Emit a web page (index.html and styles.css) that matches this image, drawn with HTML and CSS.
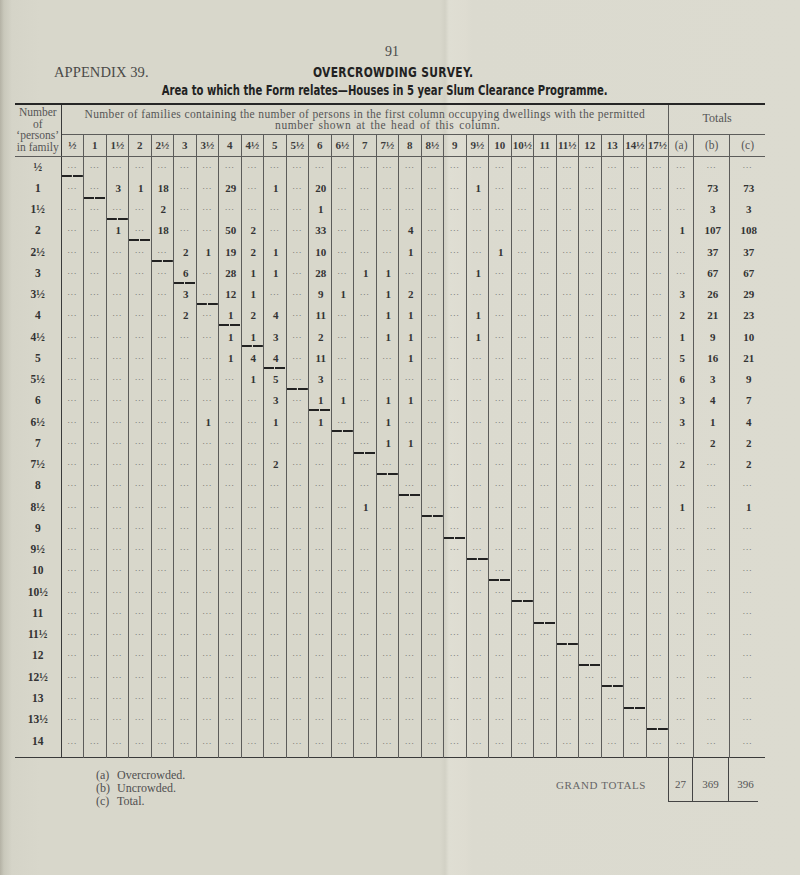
FILE: index.html
```html
<!DOCTYPE html>
<html lang="en">
<head>
<meta charset="utf-8">
<title>Appendix 39 - Overcrowding Survey</title>
<link rel="stylesheet" href="styles.css">
</head>
<body>
<div class="page">
  <div class="folio">91</div>
  <div class="titles">
    <div class="appendix">APPENDIX 39.</div>
    <div class="survey"><span class="squeeze">OVERCROWDING SURVEY.</span></div>
    <div></div>
  </div>
  <div class="subtitle"><span class="squeeze">Area to which the Form relates—Houses in 5 year Slum Clearance Programme.</span></div>

  <table class="grid">
    <colgroup>
      <col class="c-lab">
      <col class="c-d"><col class="c-d"><col class="c-d"><col class="c-d"><col class="c-d"><col class="c-d"><col class="c-d"><col class="c-d"><col class="c-d">
      <col class="c-d"><col class="c-d"><col class="c-d"><col class="c-d"><col class="c-d"><col class="c-d"><col class="c-d"><col class="c-d"><col class="c-d">
      <col class="c-d"><col class="c-d"><col class="c-d"><col class="c-d"><col class="c-d"><col class="c-d"><col class="c-d"><col class="c-d"><col class="c-d">
      <col class="c-a"><col class="c-b"><col class="c-c">
    </colgroup>
    <thead>
      <tr class="h1">
        <th class="h-lab" rowspan="2">Number<br>of<br>‘persons’<br>in family</th>
        <th class="h-main" colspan="27">Number of families containing the number of persons in the first column occupying dwellings with the permitted<span class="l2">number shown at the head of this column.</span></th>
        <th class="h-tot" colspan="3">Totals</th>
      </tr>
      <tr class="h2">
        <th>½</th><th>1</th><th>1½</th><th>2</th><th>2½</th><th>3</th><th>3½</th><th>4</th><th>4½</th><th>5</th><th>5½</th><th>6</th><th>6½</th><th>7</th><th>7½</th><th>8</th><th>8½</th><th>9</th><th>9½</th><th>10</th><th>10½</th><th>11</th><th>11½</th><th>12</th><th>13</th><th>14½</th><th>17½</th>
        <th class="t">(a)</th><th class="t">(b)</th><th class="t">(c)</th>
      </tr>
    </thead>
    <tbody>
      <tr><th>½</th><td class="s">...</td><td>...</td><td>...</td><td>...</td><td>...</td><td>...</td><td>...</td><td>...</td><td>...</td><td>...</td><td>...</td><td>...</td><td>...</td><td>...</td><td>...</td><td>...</td><td>...</td><td>...</td><td>...</td><td>...</td><td>...</td><td>...</td><td>...</td><td>...</td><td>...</td><td>...</td><td>...</td><td>...</td><td>...</td><td>...</td></tr>
      <tr><th>1</th><td>...</td><td class="s">...</td><td class="n">3</td><td class="n">1</td><td class="n">18</td><td>...</td><td>...</td><td class="n">29</td><td>...</td><td class="n">1</td><td>...</td><td class="n">20</td><td>...</td><td>...</td><td>...</td><td>...</td><td>...</td><td>...</td><td class="n">1</td><td>...</td><td>...</td><td>...</td><td>...</td><td>...</td><td>...</td><td>...</td><td>...</td><td>...</td><td class="n">73</td><td class="n">73</td></tr>
      <tr><th>1½</th><td>...</td><td>...</td><td class="s">...</td><td>...</td><td class="n">2</td><td>...</td><td>...</td><td>...</td><td>...</td><td>...</td><td>...</td><td class="n">1</td><td>...</td><td>...</td><td>...</td><td>...</td><td>...</td><td>...</td><td>...</td><td>...</td><td>...</td><td>...</td><td>...</td><td>...</td><td>...</td><td>...</td><td>...</td><td>...</td><td class="n">3</td><td class="n">3</td></tr>
      <tr><th>2</th><td>...</td><td>...</td><td class="n">1</td><td class="s">...</td><td class="n">18</td><td>...</td><td>...</td><td class="n">50</td><td class="n">2</td><td>...</td><td>...</td><td class="n">33</td><td>...</td><td>...</td><td>...</td><td class="n">4</td><td>...</td><td>...</td><td>...</td><td>...</td><td>...</td><td>...</td><td>...</td><td>...</td><td>...</td><td>...</td><td>...</td><td class="n">1</td><td class="n">107</td><td class="n">108</td></tr>
      <tr><th>2½</th><td>...</td><td>...</td><td>...</td><td>...</td><td class="s">...</td><td class="n">2</td><td class="n">1</td><td class="n">19</td><td class="n">2</td><td class="n">1</td><td>...</td><td class="n">10</td><td>...</td><td>...</td><td>...</td><td class="n">1</td><td>...</td><td>...</td><td>...</td><td class="n">1</td><td>...</td><td>...</td><td>...</td><td>...</td><td>...</td><td>...</td><td>...</td><td>...</td><td class="n">37</td><td class="n">37</td></tr>
      <tr><th>3</th><td>...</td><td>...</td><td>...</td><td>...</td><td>...</td><td class="n s">6</td><td>...</td><td class="n">28</td><td class="n">1</td><td class="n">1</td><td>...</td><td class="n">28</td><td>...</td><td class="n">1</td><td class="n">1</td><td>...</td><td>...</td><td>...</td><td class="n">1</td><td>...</td><td>...</td><td>...</td><td>...</td><td>...</td><td>...</td><td>...</td><td>...</td><td>...</td><td class="n">67</td><td class="n">67</td></tr>
      <tr><th>3½</th><td>...</td><td>...</td><td>...</td><td>...</td><td>...</td><td class="n">3</td><td class="s">...</td><td class="n">12</td><td class="n">1</td><td>...</td><td>...</td><td class="n">9</td><td class="n">1</td><td>...</td><td class="n">1</td><td class="n">2</td><td>...</td><td>...</td><td>...</td><td>...</td><td>...</td><td>...</td><td>...</td><td>...</td><td>...</td><td>...</td><td>...</td><td class="n">3</td><td class="n">26</td><td class="n">29</td></tr>
      <tr><th>4</th><td>...</td><td>...</td><td>...</td><td>...</td><td>...</td><td class="n">2</td><td>...</td><td class="n s">1</td><td class="n">2</td><td class="n">4</td><td>...</td><td class="n">11</td><td>...</td><td>...</td><td class="n">1</td><td class="n">1</td><td>...</td><td>...</td><td class="n">1</td><td>...</td><td>...</td><td>...</td><td>...</td><td>...</td><td>...</td><td>...</td><td>...</td><td class="n">2</td><td class="n">21</td><td class="n">23</td></tr>
      <tr><th>4½</th><td>...</td><td>...</td><td>...</td><td>...</td><td>...</td><td>...</td><td>...</td><td class="n">1</td><td class="n s">1</td><td class="n">3</td><td>...</td><td class="n">2</td><td>...</td><td>...</td><td class="n">1</td><td class="n">1</td><td>...</td><td>...</td><td class="n">1</td><td>...</td><td>...</td><td>...</td><td>...</td><td>...</td><td>...</td><td>...</td><td>...</td><td class="n">1</td><td class="n">9</td><td class="n">10</td></tr>
      <tr><th>5</th><td>...</td><td>...</td><td>...</td><td>...</td><td>...</td><td>...</td><td>...</td><td class="n">1</td><td class="n">4</td><td class="n s">4</td><td>...</td><td class="n">11</td><td>...</td><td>...</td><td>...</td><td class="n">1</td><td>...</td><td>...</td><td>...</td><td>...</td><td>...</td><td>...</td><td>...</td><td>...</td><td>...</td><td>...</td><td>...</td><td class="n">5</td><td class="n">16</td><td class="n">21</td></tr>
      <tr><th>5½</th><td>...</td><td>...</td><td>...</td><td>...</td><td>...</td><td>...</td><td>...</td><td>...</td><td class="n">1</td><td class="n">5</td><td class="s">...</td><td class="n">3</td><td>...</td><td>...</td><td>...</td><td>...</td><td>...</td><td>...</td><td>...</td><td>...</td><td>...</td><td>...</td><td>...</td><td>...</td><td>...</td><td>...</td><td>...</td><td class="n">6</td><td class="n">3</td><td class="n">9</td></tr>
      <tr><th>6</th><td>...</td><td>...</td><td>...</td><td>...</td><td>...</td><td>...</td><td>...</td><td>...</td><td>...</td><td class="n">3</td><td>...</td><td class="n s">1</td><td class="n">1</td><td>...</td><td class="n">1</td><td class="n">1</td><td>...</td><td>...</td><td>...</td><td>...</td><td>...</td><td>...</td><td>...</td><td>...</td><td>...</td><td>...</td><td>...</td><td class="n">3</td><td class="n">4</td><td class="n">7</td></tr>
      <tr><th>6½</th><td>...</td><td>...</td><td>...</td><td>...</td><td>...</td><td>...</td><td class="n">1</td><td>...</td><td>...</td><td class="n">1</td><td>...</td><td class="n">1</td><td class="s">...</td><td>...</td><td class="n">1</td><td>...</td><td>...</td><td>...</td><td>...</td><td>...</td><td>...</td><td>...</td><td>...</td><td>...</td><td>...</td><td>...</td><td>...</td><td class="n">3</td><td class="n">1</td><td class="n">4</td></tr>
      <tr><th>7</th><td>...</td><td>...</td><td>...</td><td>...</td><td>...</td><td>...</td><td>...</td><td>...</td><td>...</td><td>...</td><td>...</td><td>...</td><td>...</td><td class="s">...</td><td class="n">1</td><td class="n">1</td><td>...</td><td>...</td><td>...</td><td>...</td><td>...</td><td>...</td><td>...</td><td>...</td><td>...</td><td>...</td><td>...</td><td>...</td><td class="n">2</td><td class="n">2</td></tr>
      <tr><th>7½</th><td>...</td><td>...</td><td>...</td><td>...</td><td>...</td><td>...</td><td>...</td><td>...</td><td>...</td><td class="n">2</td><td>...</td><td>...</td><td>...</td><td>...</td><td class="s">...</td><td>...</td><td>...</td><td>...</td><td>...</td><td>...</td><td>...</td><td>...</td><td>...</td><td>...</td><td>...</td><td>...</td><td>...</td><td class="n">2</td><td>...</td><td class="n">2</td></tr>
      <tr><th>8</th><td>...</td><td>...</td><td>...</td><td>...</td><td>...</td><td>...</td><td>...</td><td>...</td><td>...</td><td>...</td><td>...</td><td>...</td><td>...</td><td>...</td><td>...</td><td class="s">...</td><td>...</td><td>...</td><td>...</td><td>...</td><td>...</td><td>...</td><td>...</td><td>...</td><td>...</td><td>...</td><td>...</td><td>...</td><td>...</td><td>...</td></tr>
      <tr><th>8½</th><td>...</td><td>...</td><td>...</td><td>...</td><td>...</td><td>...</td><td>...</td><td>...</td><td>...</td><td>...</td><td>...</td><td>...</td><td>...</td><td class="n">1</td><td>...</td><td>...</td><td class="s">...</td><td>...</td><td>...</td><td>...</td><td>...</td><td>...</td><td>...</td><td>...</td><td>...</td><td>...</td><td>...</td><td class="n">1</td><td>...</td><td class="n">1</td></tr>
      <tr><th>9</th><td>...</td><td>...</td><td>...</td><td>...</td><td>...</td><td>...</td><td>...</td><td>...</td><td>...</td><td>...</td><td>...</td><td>...</td><td>...</td><td>...</td><td>...</td><td>...</td><td>...</td><td class="s">...</td><td>...</td><td>...</td><td>...</td><td>...</td><td>...</td><td>...</td><td>...</td><td>...</td><td>...</td><td>...</td><td>...</td><td>...</td></tr>
      <tr><th>9½</th><td>...</td><td>...</td><td>...</td><td>...</td><td>...</td><td>...</td><td>...</td><td>...</td><td>...</td><td>...</td><td>...</td><td>...</td><td>...</td><td>...</td><td>...</td><td>...</td><td>...</td><td>...</td><td class="s">...</td><td>...</td><td>...</td><td>...</td><td>...</td><td>...</td><td>...</td><td>...</td><td>...</td><td>...</td><td>...</td><td>...</td></tr>
      <tr><th>10</th><td>...</td><td>...</td><td>...</td><td>...</td><td>...</td><td>...</td><td>...</td><td>...</td><td>...</td><td>...</td><td>...</td><td>...</td><td>...</td><td>...</td><td>...</td><td>...</td><td>...</td><td>...</td><td>...</td><td class="s">...</td><td>...</td><td>...</td><td>...</td><td>...</td><td>...</td><td>...</td><td>...</td><td>...</td><td>...</td><td>...</td></tr>
      <tr><th>10½</th><td>...</td><td>...</td><td>...</td><td>...</td><td>...</td><td>...</td><td>...</td><td>...</td><td>...</td><td>...</td><td>...</td><td>...</td><td>...</td><td>...</td><td>...</td><td>...</td><td>...</td><td>...</td><td>...</td><td>...</td><td class="s">...</td><td>...</td><td>...</td><td>...</td><td>...</td><td>...</td><td>...</td><td>...</td><td>...</td><td>...</td></tr>
      <tr><th>11</th><td>...</td><td>...</td><td>...</td><td>...</td><td>...</td><td>...</td><td>...</td><td>...</td><td>...</td><td>...</td><td>...</td><td>...</td><td>...</td><td>...</td><td>...</td><td>...</td><td>...</td><td>...</td><td>...</td><td>...</td><td>...</td><td class="s">...</td><td>...</td><td>...</td><td>...</td><td>...</td><td>...</td><td>...</td><td>...</td><td>...</td></tr>
      <tr><th>11½</th><td>...</td><td>...</td><td>...</td><td>...</td><td>...</td><td>...</td><td>...</td><td>...</td><td>...</td><td>...</td><td>...</td><td>...</td><td>...</td><td>...</td><td>...</td><td>...</td><td>...</td><td>...</td><td>...</td><td>...</td><td>...</td><td>...</td><td class="s">...</td><td>...</td><td>...</td><td>...</td><td>...</td><td>...</td><td>...</td><td>...</td></tr>
      <tr><th>12</th><td>...</td><td>...</td><td>...</td><td>...</td><td>...</td><td>...</td><td>...</td><td>...</td><td>...</td><td>...</td><td>...</td><td>...</td><td>...</td><td>...</td><td>...</td><td>...</td><td>...</td><td>...</td><td>...</td><td>...</td><td>...</td><td>...</td><td>...</td><td class="s">...</td><td>...</td><td>...</td><td>...</td><td>...</td><td>...</td><td>...</td></tr>
      <tr><th>12½</th><td>...</td><td>...</td><td>...</td><td>...</td><td>...</td><td>...</td><td>...</td><td>...</td><td>...</td><td>...</td><td>...</td><td>...</td><td>...</td><td>...</td><td>...</td><td>...</td><td>...</td><td>...</td><td>...</td><td>...</td><td>...</td><td>...</td><td>...</td><td>...</td><td class="s">...</td><td>...</td><td>...</td><td>...</td><td>...</td><td>...</td></tr>
      <tr><th>13</th><td>...</td><td>...</td><td>...</td><td>...</td><td>...</td><td>...</td><td>...</td><td>...</td><td>...</td><td>...</td><td>...</td><td>...</td><td>...</td><td>...</td><td>...</td><td>...</td><td>...</td><td>...</td><td>...</td><td>...</td><td>...</td><td>...</td><td>...</td><td>...</td><td>...</td><td class="s">...</td><td>...</td><td>...</td><td>...</td><td>...</td></tr>
      <tr><th>13½</th><td>...</td><td>...</td><td>...</td><td>...</td><td>...</td><td>...</td><td>...</td><td>...</td><td>...</td><td>...</td><td>...</td><td>...</td><td>...</td><td>...</td><td>...</td><td>...</td><td>...</td><td>...</td><td>...</td><td>...</td><td>...</td><td>...</td><td>...</td><td>...</td><td>...</td><td>...</td><td class="s">...</td><td>...</td><td>...</td><td>...</td></tr>
      <tr class="last"><th>14</th><td>...</td><td>...</td><td>...</td><td>...</td><td>...</td><td>...</td><td>...</td><td>...</td><td>...</td><td>...</td><td>...</td><td>...</td><td>...</td><td>...</td><td>...</td><td>...</td><td>...</td><td>...</td><td>...</td><td>...</td><td>...</td><td>...</td><td>...</td><td>...</td><td>...</td><td>...</td><td>...</td><td>...</td><td>...</td><td>...</td></tr>
    </tbody>
  </table>

  <div class="foot">
    <div class="notes">
      <span>(a)</span><span>Overcrowded.</span>
      <span>(b)</span><span>Uncrowded.</span>
      <span>(c)</span><span>Total.</span>
    </div>
    <div class="gt-label">GRAND TOTALS</div>
    <div class="gt">
      <span class="gt-a">27</span><span class="gt-b">369</span><span class="gt-c">396</span>
    </div>
  </div>
</div>
</body>
</html>
```

FILE: styles.css
```css
html, body {
  margin: 0;
  padding: 0;
}

body {
  background-color: #d9d8cc;
  background-image: linear-gradient(90deg, #b4b2a5 0, #c9c8bb 4px, #d5d4c8 12px, #d8d7cb 40px, #d8d7cb 440px, #d2d1c5 445px, #dfded3 449px, #dedcd1 466px, #dbdacf 472px, #dcdbd0 800px);
  font-family: "Liberation Serif", "Times New Roman", serif;
  color: #333;
  min-height: 875px;
}

.page {
  width: 750px;
  padding: 44px 0 0 15px;
}

.folio {
  padding-left: 370px;
  font-size: 14px;
  line-height: 16px;
  color: #4a4a4a;
}

.titles {
  display: grid;
  grid-template-columns: 1fr auto 1fr;
  margin-top: 3px;
  line-height: 18px;
}

.appendix {
  padding-left: 39px;
  font-size: 14.5px;
  color: #4a4a48;
  letter-spacing: 0.1px;
}

.squeeze {
  display: inline-block;
  transform: scaleX(0.82);
  transform-origin: center;
}

.survey {
  margin-left: 2px;
  margin-right: -40px;
  font-family: "Liberation Sans Narrow", "DejaVu Sans Condensed", "Liberation Sans", sans-serif;
  font-stretch: condensed;
  font-weight: bold;
  font-size: 14.5px;
  letter-spacing: 0.4px;
  color: #222;
}

.survey .squeeze {
  transform-origin: left center;
}

.subtitle {
  margin-top: 1px;
  text-align: center;
  font-family: "Liberation Sans Narrow", "DejaVu Sans Condensed", "Liberation Sans", sans-serif;
  font-stretch: condensed;
  font-weight: bold;
  font-size: 14px;
  line-height: 16px;
  color: #222;
  padding-right: 10px;
  white-space: nowrap;
}

.subtitle .squeeze {
  transform: scaleX(0.8);
}

/* ---------- table ---------- */

.grid {
  margin-top: 5px;
  border-collapse: collapse;
  table-layout: fixed;
  width: 750px;
  border-top: 2px solid #262626;
  border-bottom: 1px solid #3a3a3a;
}

.c-lab { width: 46px; }
.c-d { width: 22.5px; }
.c-a { width: 25px; }
.c-b { width: 36px; }
.c-c { width: 35.5px; }

.grid th,
.grid td {
  padding: 0;
  text-align: center;
  vertical-align: middle;
  border-left: 1px solid #5c5c5a;
}

.h1 { height: 30px; }
.h2 { height: 22px; }

.h-lab {
  border-left: none !important;
  border-right: 1px solid #3a3a3a;
  border-bottom: 1px solid #5c5c5a;
  font-weight: normal;
  font-size: 11.5px;
  line-height: 11.4px;
  color: #555;
}

.h-main {
  vertical-align: top !important;
  padding-top: 4px !important;
  border-right: 1px solid #5c5c5a;
  border-bottom: 1px solid #5c5c5a;
  border-left: 1px solid #3a3a3a !important;
  font-weight: normal;
  font-size: 11.5px;
  line-height: 11.4px;
  letter-spacing: 0.37px;
  color: #555;
  white-space: nowrap;
}

.h-main .l2 {
  display: block;
  padding-left: 46px;
  letter-spacing: 0.55px;
  word-spacing: 1.5px;
}

.h-tot {
  vertical-align: top !important;
  padding-top: 6px !important;
  border-bottom: 1px solid #5c5c5a;
  font-weight: normal;
  font-size: 12px;
  line-height: 14px;
  color: #555;
}

.h2 th {
  border-bottom: 1px solid #5c5c5a;
  font-weight: bold;
  font-size: 11px;
  color: #3c3c3c;
}

.h2 th.t {
  font-weight: normal;
  font-size: 11.5px;
  color: #555;
}

.grid tbody tr { height: 21.25px; }

.grid tbody th {
  border-left: none;
  border-right: 1px solid #3a3a3a;
  font-weight: bold;
  font-size: 11.5px;
  color: #333;
}

.grid tbody td {
  font-size: 9px;
  letter-spacing: 1px;
  color: #62625e;
  padding-bottom: 4px;
}

.grid tbody td.n {
  font-size: 11px;
  font-weight: bold;
  letter-spacing: 0;
  color: #333;
  padding-bottom: 0;
  padding-left: 2px;
}

.grid tbody td.s {
  background:
    linear-gradient(#222, #222) left bottom / 47% 2px no-repeat,
    linear-gradient(#222, #222) right bottom / 47% 2px no-repeat;
}

.grid tbody tr.last { height: 28px; }
.grid tbody tr.last th,
.grid tbody tr.last td { vertical-align: top; padding-top: 6px; }
.grid tbody tr.last th { padding-top: 5px; }

/* ---------- footer ---------- */

.foot {
  display: flex;
  align-items: flex-start;
}

.notes {
  display: grid;
  grid-template-columns: 21px auto;
  margin-left: 81px;
  padding-top: 11px;
  font-size: 12px;
  line-height: 13px;
  color: #505050;
}

.gt-label {
  margin-left: auto;
  margin-top: 20px;
  margin-right: 22px;
  font-size: 11px;
  line-height: 14px;
  letter-spacing: 0.6px;
  color: #666;
}

.gt {
  display: flex;
  margin-right: 7px;
  border-bottom: 1px solid #444;
}

.gt span {
  display: flex;
  align-items: center;
  justify-content: center;
  height: 43px;
  padding-top: 8px;
  box-sizing: border-box;
  border-left: 1px solid #444;
  font-size: 11px;
  color: #555;
}

.gt-a { width: 24px; }
.gt-b { width: 36px; }
.gt-c { width: 30px; padding-left: 4px; }
```
